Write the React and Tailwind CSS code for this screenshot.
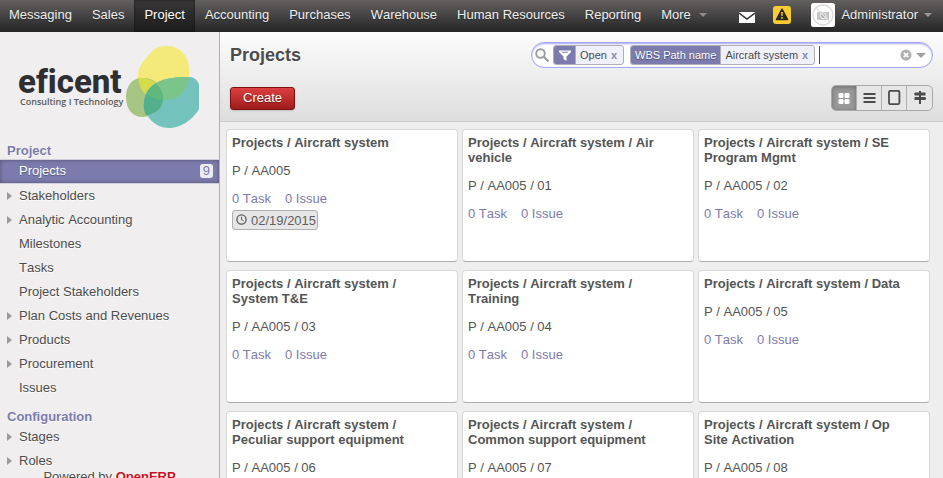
import React from "react";

const menu = ["Messaging", "Sales", "Project", "Accounting", "Purchases", "Warehouse", "Human Resources", "Reporting"];

const sections = [
  {
    title: "Project",
    items: [
      { label: "Projects", active: true, count: 9 },
      { label: "Stakeholders", children: true },
      { label: "Analytic Accounting", children: true },
      { label: "Milestones" },
      { label: "Tasks" },
      { label: "Project Stakeholders" },
      { label: "Plan Costs and Revenues", children: true },
      { label: "Products", children: true },
      { label: "Procurement", children: true },
      { label: "Issues" },
    ],
  },
  {
    title: "Configuration",
    items: [
      { label: "Stages", children: true },
      { label: "Roles", children: true },
    ],
  },
];

const projects = [
  { name: "Projects / Aircraft system", code: "P / AA005", date: "02/19/2015" },
  { name: "Projects / Aircraft system / Air vehicle", code: "P / AA005 / 01" },
  { name: "Projects / Aircraft system / SE Program Mgmt", code: "P / AA005 / 02" },
  { name: "Projects / Aircraft system / System T&E", code: "P / AA005 / 03" },
  { name: "Projects / Aircraft system / Training", code: "P / AA005 / 04" },
  { name: "Projects / Aircraft system / Data", code: "P / AA005 / 05" },
  { name: "Projects / Aircraft system / Peculiar support equipment", code: "P / AA005 / 06" },
  { name: "Projects / Aircraft system / Common support equipment", code: "P / AA005 / 07" },
  { name: "Projects / Aircraft system / Op Site Activation", code: "P / AA005 / 08" },
];

function Caret({ className }) {
  return (
    <svg viewBox="0 0 8 4" className={className} fill="currentColor" aria-hidden="true">
      <path d="M0 0h8L4 4z" />
    </svg>
  );
}

function TopBar() {
  return (
    <header className="flex h-8 shrink-0 items-stretch justify-between bg-linear-to-b from-[#646060] to-[#262626] text-[#eeeeee] [text-shadow:0_1px_1px_rgba(0,0,0,0.3)]">
      <nav className="-ml-px flex items-stretch">
        {menu.map((name) => (
          <a
            key={name}
            href="#"
            className={
              name === "Project"
                ? "flex items-center bg-linear-to-b from-[#3a3838] to-[#1c1c1c] px-2.5 pb-0.5 text-white shadow-[inset_0_0_3px_rgba(0,0,0,0.5)]"
                : "flex items-center px-2.5 pb-0.5"
            }
          >
            {name}
          </a>
        ))}
        <a href="#" className="flex items-center gap-2 px-2.5 pb-0.5">
          More
          <Caret className="h-1 w-2 text-[#8e8c8c]" />
        </a>
      </nav>
      <div className="flex items-center pr-[11px]">
        <button type="button" aria-label="Compose message" className="mt-0.5 mr-4.5">
          <svg width="16" height="11" viewBox="0 0 16 11" className="block" aria-hidden="true">
            <path d="M0 0h16v11H0z" fill="#fff" />
            <path d="M0 1l8 6 8-6" fill="none" stroke="#333" strokeWidth="1.5" />
          </svg>
        </button>
        <button type="button" aria-label="Announcements" className="mr-5 mb-0.5">
          <svg width="18" height="18" viewBox="0 0 18 18" className="block" aria-hidden="true">
            <rect width="18" height="18" rx="3" fill="#f9cb34" />
            <path d="M9 3.2l5.6 10.4H3.4z" fill="#2c2714" stroke="#2c2714" strokeWidth="1.4" strokeLinejoin="round" />
            <path d="M8.1 6h1.8l-.3 4H8.4zM8.2 11h1.6v1.7H8.2z" fill="#f9cb34" />
          </svg>
        </button>
        <a href="#" className="flex items-center gap-1.5 pb-0.5">
          <svg width="24" height="24" viewBox="0 0 24 24" aria-hidden="true">
            <rect width="24" height="24" rx="2.5" fill="#fff" />
            <circle cx="12" cy="12" r="10" fill="none" stroke="#dcdcdc" strokeWidth="1.3" />
            <path d="M6 9h2.500v-1h2v1H18v8H6z" fill="#c4c4c4" />
            <circle cx="12.300" cy="12.800" r="2.800" fill="#b0b0b0" stroke="#f4f4f4" />
            <path d="M5 5l14 14" stroke="#e6e6e6" strokeWidth="1.300" />
          </svg>
          <span>Administrator</span>
          <Caret className="h-1 w-2 text-[#9a9898]" />
        </a>
      </div>
    </header>
  );
}

function Logo() {
  return (
    <a href="#" aria-label="eficent" className="mt-3 ml-4.5 flex h-[86px] shrink-0 [text-shadow:none]">
      <svg width="182" height="86" viewBox="18 44 182 86" aria-hidden="true">
        <text
          x="18"
          y="93"
          fontFamily="Roboto, sans-serif"
          fontWeight="800"
          fontSize="33"
          fill="#2f2f31"
          className="[font-variant-ligatures:none]"
        >
          eficent
        </text>
        <text x="20" y="105" fontFamily="'Open Sans', sans-serif" fontWeight="600" fontSize="9" fill="#5a5a5c">
          Consulting I Technology
        </text>
        <path d="M167 46c12 0 20 8 22 20 2 17-7 34-25 34-16 0-26-9-26-23 0-9 3-13 9-20 6-8 11-11 20-11z" fill="#f4ea79" />
        <path d="M142 78c10-1 20 6 21 18 1 12-8 20-20 21-11 0-17-8-17-20 0-11 6-19 16-19z" fill="#a8c683" />
        <path d="M138.300 78c11-1 23 5 24.600 21.500-14 2-23.500-8-24.600-21.500z" fill="#d5dc48" />
        <path d="M199 84v25c-5 9-17 19-30 19-14 0-25-12-25-25 0-8 4-17 15-21.500 8-3.500 18-5 31-4.500 4 0 7 3 9 7z" fill="#73c3bc" />
        <path d="M189 77c-1 14-11 23-25 23-8 0-13-2-17-6 3-6 7-10 12-12.500 8-3.500 18-5 30-4.500z" fill="#7bc48a" />
        <path d="M155.500 83.500c4 3 7.500 8 7.500 15 0 8-5 14.500-17 17-2-4-3-9-2-14 1-7 4-13 11.500-18z" fill="#53b08d" />
        <path d="M155.500 83.500c4 3 7 8 7.300 16.400-6-.2-12-2.500-15.800-6 2-4 4.500-7.500 8.500-10.400z" fill="#5fb97b" />
      </svg>
    </a>
  );
}

function MenuItem({ item }) {
  if (item.active) {
    return (
      <a
        href="#"
        aria-current="page"
        className="flex h-[25px] items-center justify-between border-y border-[#d0cfdc] bg-[#7c7bad] pr-1.5 pb-px pl-[19px] text-white shadow-[inset_0_0_4px_rgba(0,0,0,0.35)] [text-shadow:0_1px_1px_rgba(0,0,0,0.3)]"
      >
        {item.label}
        <span className="rounded-[3px] bg-[#edecf3] px-[3px] text-[13px] leading-[14px] text-[#7c7bad] [text-shadow:none]">
          {item.count}
        </span>
      </a>
    );
  }
  return (
    <a href="#" className="flex h-6 items-center pl-[7px]">
      <span className="w-3">
        {item.children && (
          <svg width="5" height="8" viewBox="0 0 5 8" className="block" aria-hidden="true">
            <path d="M0 0l5 4-5 4z" fill="#9b9a9a" />
          </svg>
        )}
      </span>
      {item.label}
    </a>
  );
}

function Sidebar() {
  return (
    <aside className="flex w-[220px] shrink-0 flex-col border-r border-[#afafb6] bg-[#f0eeee] [text-shadow:0_1px_1px_#ffffff]">
      <Logo />
      <nav className="mt-1 min-h-0 flex-1 overflow-hidden">
        {sections.map((section) => (
          <div key={section.title}>
            <h2 className="h-[25px] pt-2 pl-[7px] leading-[17px] font-bold text-[#7c7bad]">{section.title}</h2>
            {section.items.map((item) => (
              <MenuItem key={item.label} item={item} />
            ))}
          </div>
        ))}
      </nav>
      <footer className="h-2.5 shrink-0 text-center leading-[18px]">
        Powered by{" "}
        <a href="#" className="font-bold text-[#cc0f1b] underline">
          OpenERP
        </a>
      </footer>
    </aside>
  );
}

function Facet({ label, value, wide }) {
  return (
    <div className="flex h-5 shrink-0 items-stretch overflow-hidden rounded-[3px] border border-[#afafb6] bg-[#f0f0fa] text-[11px]">
      <span
        className={
          wide
            ? "flex items-center bg-[#7c7bad] px-1 text-white [text-shadow:0_1px_1px_rgba(0,0,0,0.4)]"
            : "flex w-[21px] items-center justify-center bg-[#7c7bad]"
        }
      >
        {label}
      </span>
      <span className="flex items-center border-l border-[#afafb6] pr-1 pl-1">{value}</span>
      <button type="button" aria-label={"Remove " + value} className="pr-1.5 font-bold text-[#8786b7]">
        x
      </button>
    </div>
  );
}

function Search() {
  return (
    <div className="flex h-[26px] w-[402px] items-center rounded-full border border-[#a6a6fe] bg-white pr-1.5 pl-[3px] shadow-[inset_0_1px_2px_#a6a6fe]">
      <svg width="14" height="14" viewBox="0 0 14 14" className="mr-1 shrink-0" aria-hidden="true">
        <circle cx="5.500" cy="5.500" r="4.300" fill="none" stroke="#9c9c9c" strokeWidth="1.900" />
        <path d="M8.800 8.800l4 4" stroke="#9c9c9c" strokeWidth="2.300" strokeLinecap="round" />
      </svg>
      <div className="flex items-center gap-1.5">
        <Facet
          value="Open"
          label={
            <svg width="12" height="11" viewBox="0 0 12 11" role="img" aria-label="Filter">
              <path d="M0 0.500h12v1.500L7.500 6.500V11l-3-2V6.500L0 2z" fill="#fff" />
              <path d="M2.500 1.700h7L8.500 2.700h-5z" fill="#7c7bad" />
            </svg>
          }
        />
        <Facet wide label="WBS Path name" value="Aircraft system" />
      </div>
      <span className="ml-1 h-[18px] w-px shrink-0 bg-[#4c4c4c]" />
      <input type="text" aria-label="Search" className="min-w-0 flex-1 outline-none" />
      <button type="button" aria-label="Clear search" className="mr-1 shrink-0">
        <svg width="12" height="12" viewBox="0 0 12 12" className="block" aria-hidden="true">
          <circle cx="6" cy="6" r="5.500" fill="#b0b0b0" />
          <path d="M3.800 3.800l4.400 4.400M8.200 3.800L3.800 8.200" stroke="#fff" strokeWidth="1.700" />
        </svg>
      </button>
      <button type="button" aria-label="Advanced search" className="shrink-0">
        <Caret className="block h-[5px] w-2.5 text-[#a0a0a0]" />
      </button>
    </div>
  );
}

const views = [
  {
    name: "Kanban",
    icon: (
      <g fill="#fff">
        <rect x="2.500" y="3" width="5" height="5" rx="1.200" />
        <rect x="8.500" y="3" width="5" height="5" rx="1.200" />
        <rect x="2.500" y="9" width="5" height="5" rx="1.200" />
        <rect x="8.500" y="9" width="5" height="5" rx="1.200" />
      </g>
    ),
  },
  { name: "List", icon: <path d="M2.500 4h12M2.500 8h12M2.500 12h12" stroke="#4c4c4c" strokeWidth="1.800" /> },
  { name: "Form", icon: <rect x="3" y="0.800" width="10.400" height="13.400" rx="1.500" fill="none" stroke="#4c4c4c" strokeWidth="1.800" /> },
  {
    name: "Gantt",
    icon: <path d="M7 1h2v1.500h4.500v3H9v1.500h4.500l.5 1.500-.5 1.500H9v4H7v-4H2.500V7H7V5.500H3L2 4l1-1.500h4z" fill="#4c4c4c" />,
  },
];

function ViewSwitcher() {
  return (
    <div className="flex h-[26px] divide-x divide-[#afafaf] overflow-hidden rounded-[5px] border border-[#a8a8a8] bg-[#e6e6e6]">
      {views.map((view, i) => (
        <button
          key={view.name}
          type="button"
          aria-label={view.name}
          className={
            i === 0
              ? "flex w-[25px] items-center justify-center bg-[#999999] shadow-[inset_0_1px_4px_rgba(0,0,0,0.3)]"
              : "flex w-[25px] items-center justify-center"
          }
        >
          <svg width="16" height="16" viewBox="0 0 16 16" aria-hidden="true">
            {view.icon}
          </svg>
        </button>
      ))}
    </div>
  );
}

function ProjectCard({ project }) {
  return (
    <article className="h-[133px] rounded-[4px] border border-[#d8d8d8] border-b-[#aeaeae] bg-white pt-[5px] pr-5 pl-[5px] leading-[15px] text-[#555555]">
      <h3 className="font-bold">{project.name}</h3>
      <p className="mt-[13px]">{project.code}</p>
      <div className="mt-[13px] flex gap-3.5 text-[#7c7bad]">
        <a href="#">0 Task</a>
        <a href="#">0 Issue</a>
      </div>
      {project.date && (
        <button
          type="button"
          className="mt-1 flex h-5 items-center gap-1 rounded-[3px] border border-[#afafaf] bg-[#e6e6e6] pr-px pl-[3px] text-[#606060]"
        >
          <svg width="11" height="11" viewBox="0 0 11 11" className="mb-0.5" aria-hidden="true">
            <circle cx="5.500" cy="5.500" r="4.600" fill="none" stroke="#5c5c5c" strokeWidth="1.300" />
            <path d="M5.500 2.800V5.700l2 1" fill="none" stroke="#5c5c5c" />
          </svg>
          {project.date}
        </button>
      )}
    </article>
  );
}

export default function App() {
  return (
    <div className="flex h-screen flex-col overflow-hidden bg-[#eeeeee] font-['Liberation_Sans',Arial,sans-serif] text-[13px] text-[#4c4c4c] [font-kerning:none]">
      <TopBar />
      <div className="flex min-h-0 flex-1">
        <Sidebar />
        <main className="min-w-0 flex-1 overflow-hidden">
          <div className="border-b border-[#cacaca] bg-linear-to-b from-[#fcfcfc] to-[#dedede] p-2.5">
            <div className="flex items-center justify-between">
              <h1 className="text-[18px] leading-6 font-bold [text-shadow:0_1px_1px_#ffffff]">Projects</h1>
              <Search />
            </div>
            <div className="mt-[17px] flex items-center justify-between">
              <button
                type="button"
                className="h-[23px] rounded-[3px] border border-[#7d1010] bg-linear-to-b from-[#dc3f41] to-[#a11b1b] px-3 leading-5 text-white shadow-[0_1px_2px_rgba(0,0,0,0.15)] [text-shadow:0_1px_1px_rgba(0,0,0,0.4)]"
              >
                Create
              </button>
              <ViewSwitcher />
            </div>
          </div>
          <div className="grid grid-cols-3 gap-x-1 gap-y-2 pt-[7px] pr-[13px] pl-1.5">
            {projects.map((project) => (
              <ProjectCard key={project.code} project={project} />
            ))}
          </div>
        </main>
      </div>
    </div>
  );
}
